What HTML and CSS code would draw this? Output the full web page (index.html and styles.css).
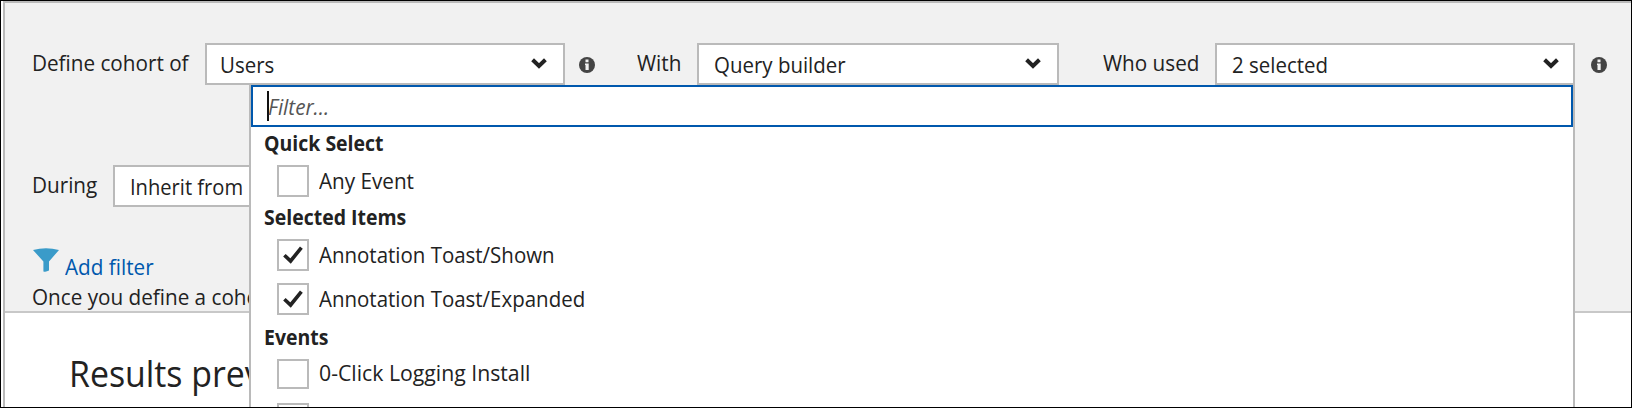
FILE: index.html
```html
<!DOCTYPE html>
<html lang="en">
<head>
<meta charset="utf-8">
<title>Cohort editor</title>
<link rel="stylesheet" href="styles.css">
</head>
<body>
<svg class="defs" width="0" height="0">
  <symbol id="chevron" viewBox="0 0 16 11"><path d="M1.6 1.8 L8 8 L14.4 1.8" fill="none" stroke="#222" stroke-width="4"/></symbol>
  <symbol id="info" viewBox="0 0 16 16"><circle cx="8" cy="8" r="8" fill="#444"/><path d="M6.5 2.6h3v2.6h-3zM6 6.4h3.7v6.6h-3.2v-5h-.5z" fill="#f1f1f1"/></symbol>
  <symbol id="check" viewBox="0 0 20 18"><path d="M1.4 9.2 L7.6 15 L18.4 1.6" fill="none" stroke="#222" stroke-width="3.6"/></symbol>
</svg>
<div class="frame">
  <main class="blade">
    <section class="editor">
      <div class="row row-main">
        <span class="label l-cohort"><span class="t">Define cohort of</span></span>
        <div class="select s-users"><span class="t narrow">Users</span><svg class="chevron"><use href="#chevron"/></svg></div>
        <svg class="info"><use href="#info"/></svg>
        <span class="label l-with"><span class="t">With</span></span>
        <div class="select s-query"><span class="t narrow">Query builder</span><svg class="chevron"><use href="#chevron"/></svg></div>
        <span class="label l-who"><span class="t">Who used</span></span>
        <div class="select s-who"><span class="t narrow">2 selected</span><svg class="chevron"><use href="#chevron"/></svg></div>
        <svg class="info"><use href="#info"/></svg>
      </div>
      <div class="row row-during">
        <span class="label l-during"><span class="t">During</span></span>
        <div class="select s-during"><span class="t t-inherit">Inherit from</span></div>
      </div>
      <div class="add-filter">
        <svg class="funnel" viewBox="0 0 26 24"><path d="M0 2 Q13 -1.6 26 2 L16 13.5 V22.6 Q13 24.2 10.4 23.4 V13.5 Z" fill="#3a9bc9"/></svg>
        <a class="t t-add">Add filter</a>
      </div>
      <p class="hint"><span class="t">Once you define a coho</span></p>
    </section>
    <h1 class="results"><span class="t">Results prev</span></h1>
  </main>
  <div class="dropdown">
    <div class="filter"><span class="caret"></span><span class="t t-filter">Filter...</span></div>
    <h2 class="group g-quick"><span class="t">Quick Select</span></h2>
    <div class="option"><span class="box"></span><span class="t">Any Event</span></div>
    <h2 class="group g-items"><span class="t">Selected Items</span></h2>
    <div class="option"><span class="box"><svg class="check"><use href="#check"/></svg></span><span class="t narrow">Annotation Toast/Shown</span></div>
    <div class="option gap"><span class="box"><svg class="check"><use href="#check"/></svg></span><span class="t narrow">Annotation Toast/Expanded</span></div>
    <h2 class="group g-events"><span class="t">Events</span></h2>
    <div class="option short"><span class="box"></span><span class="t t-click">0-Click Logging Install</span></div>
    <div class="option next"><span class="box"></span></div>
  </div>
</div>
</body>
</html>
```
FILE: styles.css
```css
* { box-sizing: border-box; }
body { margin: 0; font-family: "Open Sans", "Noto Sans", sans-serif; font-size: 22px; line-height: 30px; color: #222; }
h1, h2, p { margin: 0; }
svg { display: block; flex: none; }
.defs { position: absolute; }
.t { display: inline-block; white-space: nowrap; transform: scaleX(.94); transform-origin: 0 0; }
.narrow { transform: scaleX(.93); }
.t-inherit { transform: scaleX(.915); }
.t-click { transform: scaleX(.965); }

.frame { position: relative; width: 1632px; height: 408px; border: 1px solid #000; background: #fff; overflow: hidden; }
.blade { height: 406px; margin-left: 2px; border-left: 2px solid #bababa; border-top: 2px solid #bababa; }
.editor { height: 310px; background: #f1f1f1; border-bottom: 2px solid #c8c8c8; padding: 40px 0 0 28px; }

.row { display: flex; height: 42px; }
.row-during { margin-top: 80px; }
.label { flex: none; padding-top: 4px; margin-left: -1px; }
.l-cohort { width: 173px; }
.l-with { width: 60px; margin-left: 42px; }
.l-who { width: 112px; margin-left: 44px; }
.l-during { width: 81px; }
.select { flex: none; display: flex; justify-content: space-between; background: #fff; border: 2px solid #bababa; padding: 4px 16px 0 13px; }
.s-users { width: 360px; }
.s-query { width: 362px; padding-left: 15px; }
.s-who { width: 360px; padding-left: 15px; padding-right: 14px; }
.s-during { width: 360px; padding-left: 15px; }
.chevron { width: 16px; height: 11px; margin-top: 9px; }
.info { width: 16px; height: 16px; margin: 14px 0 0 14px; }
.s-who + .info { margin-left: 16px; }

.add-filter { display: flex; margin-top: 41px; height: 34px; }
.funnel { width: 26px; height: 24px; }
.t-add { color: #0058ad; margin: 3px 0 0 6px; }
.hint { margin: -1px 0 0 -1px; }
.results { font-size: 36px; font-weight: 400; line-height: 48px; margin: 37px 0 0 64px; white-space: nowrap; }

.dropdown { position: absolute; left: 248px; top: 84px; width: 1326px; height: 330px; background: #fff; border: 2px solid #bababa; border-top: 0; border-bottom: 0; }
.filter { display: flex; height: 42px; border: 2px solid #0058ad; padding: 4px 0 0 14px; }
.caret { width: 2px; height: 30px; background: #111; }
.t-filter { font-style: italic; color: #555; margin-left: -1px; }
.group { font-size: 22px; line-height: 30px; font-weight: 700; height: 30px; padding-left: 13px; }
.group .t { transform: scaleX(.885); }
.option { display: flex; gap: 10px; padding-left: 26px; margin-top: 8px; height: 32px; line-height: 30px; }
.box { flex: none; width: 32px; height: 32px; border: 2px solid #bababa; }
.g-items { margin-top: 4px; }
.option.gap { margin-top: 12px; }
.g-events { margin-top: 6px; }
.option.short, .short .box { height: 30px; }
.option.short { line-height: 26px; }
.option.next { margin-top: 14px; }
.check { width: 20px; height: 18px; margin: 5px 0 0 4px; }
```
